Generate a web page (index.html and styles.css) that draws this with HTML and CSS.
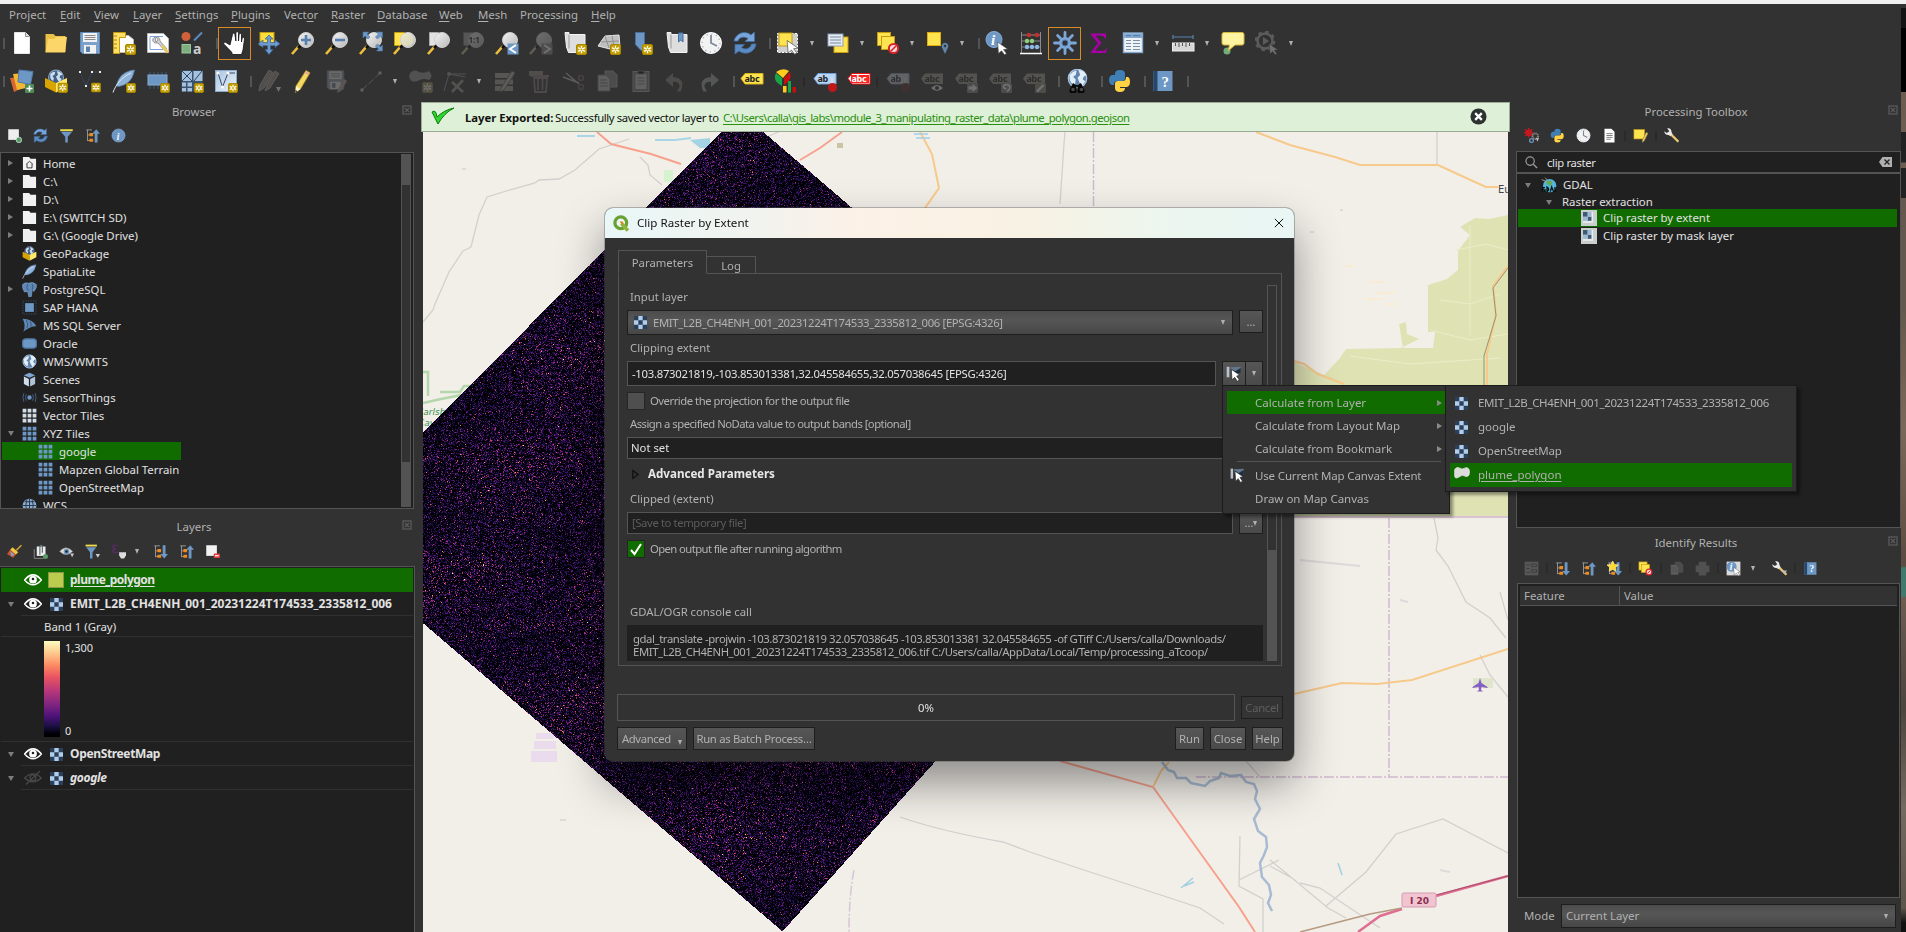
FILE: index.html
```html
<!DOCTYPE html>
<html lang="en">
<head>
<meta charset="utf-8">
<title>QGIS</title>
<link rel="stylesheet" href="styles.css">
</head>
<body>
<svg class="defs" width="0" height="0" aria-hidden="true">
<defs>
<linearGradient id="g-lens" x1="0" y1="0" x2="1" y2="1"><stop offset="0" stop-color="#f4f4f4"/><stop offset="1" stop-color="#b8b8b8"/></linearGradient>
<linearGradient id="g-sheet" x1="0" y1="0" x2="1" y2="1"><stop offset="0" stop-color="#a9c4e2"/><stop offset="1" stop-color="#eef3f8"/></linearGradient>
<symbol id="badge" viewBox="0 0 11 11"><rect x=".5" y=".5" width="10" height="10" rx="1.500" fill="#c4a000" stroke="#a88600"/><path d="M5.500 1.800v7.400M2 3.700l7 3.600M2 7.300l7-3.600" stroke="#fff" stroke-width="1.300"/><circle cx="5.500" cy="5.500" r="1" fill="#c4a000"/></symbol>
<symbol id="cursor" viewBox="0 0 12 14"><path d="M1 1l10 7-4 .6 3 4-2 1.200-3-4-3 2.700z" fill="#fff" stroke="#444" stroke-width=".6"/></symbol>
<symbol id="new" viewBox="0 0 24 24"><path d="M4.500 1.500h11l4 4v17h-15z" fill="#fff" stroke="#e6e6e6"/><path d="M15.500 1.500v4h4" fill="#ddd" stroke="#777" stroke-width=".8"/></symbol>
<symbol id="open" viewBox="0 0 24 24"><path d="M1.500 3h8l2 2h10v16h-20z" fill="#e9bf45"/><path d="M1.500 21.500L4 8h6l2-2h11l-2 15.500z" fill="#fcd668"/></symbol>
<symbol id="save" viewBox="0 0 24 24"><path d="M2.500 1.500h19v21h-17l-2-2z" fill="#7ba2cd" stroke="#6088b5"/><rect x="5" y="2" width="14" height="9" fill="#f2f2f2"/><path d="M6.500 4.500h11M6.500 6.500h11M6.500 8.500h11" stroke="#8a8a8a"/><rect x="6" y="14" width="12" height="8.500" fill="#f2f2f2"/><rect x="8" y="15.500" width="4" height="5.500" fill="#5d82ad"/></symbol>
<symbol id="newlayout" viewBox="0 0 24 24"><path d="M5.500 4.500h11l5 4v13h-16z" fill="#fff" stroke="#bbb"/><path d="M1.500 1.500h12v5h-6v16h-6z" fill="#ffdf67" stroke="#c59b11"/><path d="M2 5h3M2 9h3M2 13h3M2 17h3" stroke="#a88600"/><use href="#badge" x="13" y="13" width="11" height="11"/></symbol>
<symbol id="layoutmgr" viewBox="0 0 24 24"><path d="M1.500 2.500h16l5 5v14h-21z" fill="#fff" stroke="#bbb"/><path d="M4 5.500h13M4 5.500v13h13" stroke="#7aa0e0" fill="none"/><path d="M9 6c-3 1-3 5 0 6l3 0 7 8 2-2-7-8c0-3-2-5-4-4l2 3-2 2z" fill="#cfcfcf" stroke="#777" stroke-width=".7"/><path d="M16 15l6 6.500" stroke="#e8c860" stroke-width="3"/></symbol>
<symbol id="style" viewBox="0 0 24 24"><circle cx="6" cy="5.500" r="4.500" fill="#d2603a"/><path d="M14 9.500l8-8" stroke="#5d8ac0" stroke-width="2"/><rect x="2" y="13.500" width="8.500" height="8.500" fill="#7fae7f" stroke="#9cc79c"/><text x="13" y="22.500" class="ti a">a</text></symbol>
<symbol id="pan" viewBox="0 0 24 24"><path d="M7 14L3 11.500c-2-1-3 1-1.500 2.200L8.500 21l1 2.500h9L20 19l1.500-11c0-2-2-2-2.500 0l-.5 3V4c0-2-2.400-2-2.500 0l-.5 6V2.200c0-2-2.500-2-2.600 0V10l-1-6.500c-.3-2-2.700-1.500-2.500.3z" fill="#fff" stroke="#111" stroke-width=".8"/></symbol>
<symbol id="pansel" viewBox="0 0 24 24"><rect x="3" y="1.500" width="14" height="13" fill="#ffdf3c" stroke="#c59b11"/><path d="M12 4l4 4h-2.500v3.500H18V9l5 3.800-5 3.800V14.500h-4.500v4H16l-4 5-4-5h2.500v-4H6v2.100L1 12.800 6 9v2.500h4.500V8H8z" fill="#6d9bd1" stroke="#35618f" stroke-width=".7"/></symbol>
<symbol id="lens" viewBox="0 0 24 24"><path d="M1 23l7-8" stroke="#efc03d" stroke-width="2.600"/><path d="M7 17l3-3" stroke="#111" stroke-width="2.600"/><circle cx="15" cy="9" r="7.500" fill="url(#g-lens)" stroke="#d0d0d0"/></symbol>
<symbol id="zin" viewBox="0 0 24 24"><use href="#lens"/><path d="M15 4v10M10 9h10" stroke="#5680b3" stroke-width="2.600"/></symbol>
<symbol id="zout" viewBox="0 0 24 24"><use href="#lens"/><path d="M10 9h10" stroke="#5680b3" stroke-width="2.600"/></symbol>
<symbol id="zfull" viewBox="0 0 24 24"><use href="#lens"/><path d="M4 1h6L8 3l3 3-2 2-3-3-2 2zM23.500 1v6l-2-2-3 3-2-2 3-3-2-2zM23.500 20h-6l2-2-3-3 2-2 3 3 2-2z" fill="#6d97c4" stroke="#47709f" stroke-width=".6"/></symbol>
<symbol id="zsel" viewBox="0 0 24 24"><path d="M1.500 1.500h10v13h-10z" fill="#ffe34f" stroke="#c59b11"/><use href="#lens"/><circle cx="14.500" cy="9" r="6" fill="#e8e1b0" opacity=".6"/></symbol>
<symbol id="zlay" viewBox="0 0 24 24"><path d="M2.500 1.500h9v13h-9z" fill="#e2e2e2" stroke="#aaa"/><use href="#lens"/></symbol>
<symbol id="z11" viewBox="0 0 24 24"><path d="M2.500 1.500h9v13h-9z" fill="#aaa"/><use href="#lens"/><text x="7.500" y="12" class="ti one">1:1</text></symbol>
<symbol id="zlast" viewBox="0 0 24 24"><use href="#lens"/><rect x="12.500" y="12.500" width="11" height="11" fill="#6d97c4"/><path d="M21 14l-6 4 6 4" stroke="#fff" stroke-width="2" fill="none"/></symbol>
<symbol id="znext" viewBox="0 0 24 24"><use href="#lens"/><rect x="12.500" y="12.500" width="11" height="11" fill="#888"/><path d="M15 14l6 4-6 4" stroke="#fff" stroke-width="2" fill="none"/></symbol>
<symbol id="mapview" viewBox="0 0 24 24"><path d="M2 1.500h4v2h16v18H5.500L3.500 16z" fill="#dedede" stroke="#f4f4f4"/><path d="M6 3.500v14" stroke="#9a9a9a"/><use href="#badge" x="13" y="13" width="11" height="11"/></symbol>
<symbol id="map3d" viewBox="0 0 24 24"><path d="M1 15L8 5l14-1 1 12-10 2z" fill="#bfbfbf" stroke="#e6e6e6"/><path d="M4 11l18-1M8 5l4 12M15 4.500l2 12" stroke="#888" fill="none" stroke-width=".8"/><use href="#badge" x="13" y="13" width="11" height="11"/></symbol>
<symbol id="bm" viewBox="0 0 24 24"><path d="M4.500 1.500h9v20l-4.500-3-4.500-5z" fill="#6d97c4" stroke="#48709f"/><use href="#badge" x="11" y="13" width="11" height="11"/></symbol>
<symbol id="bms" viewBox="0 0 24 24"><path d="M2 1.500h4v2h16v18H5.500L3.500 16z" fill="#dedede" stroke="#f4f4f4"/><path d="M6 3.500v14" stroke="#9a9a9a"/><path d="M13.500 2h4.500v9l-2.200-2-2.300 2z" fill="#6d97c4" stroke="#48709f"/></symbol>
<symbol id="clock" viewBox="0 0 24 24"><circle cx="12" cy="12" r="10.500" fill="#f3f3f3" stroke="#fff"/><circle cx="12" cy="12" r="9" fill="none" stroke="#97a9bd" stroke-width="1.200" stroke-dasharray="1.200 3.500"/><path d="M12 4v8l6 3" fill="none" stroke="#7d8a98" stroke-width="1.800"/></symbol>
<symbol id="refresh" viewBox="0 0 24 24"><path d="M1 10C3 2 12-1 18 4l3.500-3v9.500H12l3-3C11 5 6 6 5 10z" fill="#79a6da" stroke="#3f6ea5" stroke-width=".8"/><path d="M23 13c-1 8-10 12-17 7l-4 3v-9.500h9.500l-3 3c4 3 9 1 10-3.500z" fill="#5c8bc2" stroke="#3f6ea5" stroke-width=".8"/></symbol>
<symbol id="sel" viewBox="0 0 24 24"><path d="M1.500 2.500h20v19h-20z" fill="#cfcfcf" stroke="#fff" stroke-dasharray="2 1.500"/><rect x="3" y="2" width="13" height="13" fill="#ffe34f" stroke="#c59b11"/><use href="#cursor" x="10" y="8" width="13" height="16"/></symbol>
<symbol id="selform" viewBox="0 0 24 24"><rect x="8" y="6" width="14" height="15.500" fill="#ffe34f" stroke="#c59b11"/><rect x="2" y="3" width="15" height="12" fill="#e6ecf2" stroke="#8da0b3"/><path d="M4 6h11M4 9h11M4 12h11" stroke="#728aa3"/></symbol>
<symbol id="desel" viewBox="0 0 24 24"><rect x="1.500" y="1.500" width="13" height="13" fill="#ffe34f" stroke="#c59b11"/><rect x="5.500" y="5.500" width="13" height="13" fill="#ffe34f" stroke="#c59b11"/><circle cx="17.500" cy="17.500" r="4.600" fill="#f6dada" stroke="#d8242b" stroke-width="2"/><path d="M15 20l5-5" stroke="#d8242b" stroke-width="1.600"/></symbol>
<symbol id="selloc" viewBox="0 0 24 24"><rect x="1.500" y="1.500" width="13" height="13" fill="#ffe34f" stroke="#e0ad0c"/><path d="M19 23l-3-6.500a3.300 3.300 0 1 1 6 0z" fill="#5f86a8"/><circle cx="19" cy="15" r="1.200" fill="#333"/></symbol>
<symbol id="ident" viewBox="0 0 24 24"><circle cx="9" cy="8.500" r="8" fill="#6d97c4" stroke="#87aed8"/><text x="6" y="14" class="ti ii">i</text><use href="#cursor" x="11" y="10" width="13" height="14"/></symbol>
<symbol id="abacus" viewBox="0 0 24 24"><path d="M2.500 1v21M21.500 1v21M2 4h20M2 10h20M2 16h20" stroke="#8a8a8a" fill="none"/><path d="M1 22.500h22" stroke="#fff" stroke-width="1.500"/><g><circle cx="10" cy="4" r="2.200" fill="#d02a2a"/><circle cx="18" cy="4" r="2.200" fill="#d02a2a"/><circle cx="8" cy="10" r="2.200" fill="#8fd07c"/><circle cx="13" cy="10" r="2.200" fill="#8fd07c"/><circle cx="8" cy="16" r="2.200" fill="#8db9e8"/><circle cx="13" cy="16" r="2.200" fill="#8db9e8"/><circle cx="18" cy="16" r="2.200" fill="#8db9e8"/></g></symbol>
<symbol id="gear" viewBox="0 0 24 24"><path d="M12 1.500v21M1.500 12h21M4.600 4.600l14.800 14.800M4.600 19.400L19.400 4.600" stroke="#7ca6d8" stroke-width="2.800" stroke-linecap="round"/><circle cx="12" cy="12" r="6" fill="#7ca6d8"/><circle cx="12" cy="12" r="3" fill="#323232" stroke="#4f7aac"/></symbol>
<symbol id="sigma" viewBox="0 0 24 24"><path d="M4 2.500h15v5h-1.200c-.5-2-1.300-2.800-3.500-2.800H8.500l6 7-6.500 8h7.500c2.500 0 3.500-1 4-3H20l-1 5.300H4v-1.200l7-8.500-7-8.200z" fill="#a800a8"/></symbol>
<symbol id="table" viewBox="0 0 24 24"><rect x="2.500" y="2" width="19" height="19.500" fill="#eef3f8" stroke="#84a9d1" stroke-width="1.400"/><rect x="3" y="2.500" width="18" height="4.500" fill="#84a9d1"/><path d="M5 4.700h5M12 4.700h7" stroke="#4c76a5"/><path d="M5 9.500h5M12 9.500h7M5 12.500h5M12 12.500h7M5 15.500h5M12 15.500h7M5 18.500h5M12 18.500h7" stroke="#7c8ea3" stroke-width="1.200"/></symbol>
<symbol id="measure" viewBox="0 0 24 24"><path d="M2 6h20M2 4v4M22 4v4" stroke="#5781ad" stroke-width="1.200"/><rect x="1.500" y="12" width="21.500" height="8" fill="#d6d6d6" stroke="#efefef"/><path d="M4.500 12v3M8 12v4M11.500 12v3M15 12v4M18.500 12v3" stroke="#555"/></symbol>
<symbol id="tip" viewBox="0 0 24 24"><circle cx="6" cy="20" r="3.500" fill="#6fae78"/><path d="M3 1.500h18q2 0 2 2v8.500q0 2-2 2h-7l-7 6 1.500-6H3q-2 0-2-2V3.500q0-2 2-2z" fill="#fdf3a0" stroke="#d8b63a"/></symbol>
<symbol id="action" viewBox="0 0 24 24"><circle cx="10" cy="10" r="7.500" fill="none" stroke="#bbb" stroke-width="2.500"/><circle cx="10" cy="10" r="9.300" fill="none" stroke="#bbb" stroke-width="2" stroke-dasharray="3.500 3.800"/><path d="M8 6l6 4-6 4z" fill="#bbb"/><use href="#cursor" x="13" y="12" width="11" height="12"/></symbol>
<symbol id="dsm" viewBox="0 0 24 24"><path d="M0 9l10-1 2 11-8 4z" fill="#d8682e"/><path d="M3 5l12-1 1 15-9 2z" fill="#f2b833"/><path d="M9 1l14 1.500-2.500 13L8 13z" fill="#6d97c4" stroke="#507cab"/><rect x="15" y="15" width="9" height="9" rx="1" fill="#4f8a57"/><path d="M19.500 16.500v6M16.500 19.500h6" stroke="#fff" stroke-width="1.600"/></symbol>
<symbol id="globe" viewBox="0 0 24 24"><circle cx="12" cy="12" r="10.500" fill="#3e5f86" stroke="#8eabc9" stroke-width="1.500"/><path d="M4 7q4-4 7-3l-1 4-3 2 2 3-1 4q-5-2-4-10zM13 3q6 0 8 5l-3 1-1 3 3 2-3 5-3-4-2-4 3-3z" fill="#cfdcea"/></symbol>
<symbol id="wglobe" viewBox="0 0 24 24"><circle cx="12" cy="12" r="10.500" fill="#5f83ad" stroke="#a9c4e2" stroke-width="1.500"/><path d="M3 8q4-5 8-5l-1 5-3 2 3 3-1 7q-7-3-6-12zM13 2q7 1 9 6l-3 2-1 3 3 2-4 6-3-5-2-5 3-3z" fill="#e3edf7"/></symbol>
<symbol id="gpkg" viewBox="0 0 24 24"><use href="#globe" x="3.500" y="0" width="17" height="17"/><path d="M1 9l11 5v9.500L1 18z" fill="#d9a400"/><path d="M23 9l-11 5v9.500L23 18z" fill="#ffe96b"/></symbol>
<symbol id="gpkgn" viewBox="0 0 24 24"><use href="#gpkg"/><use href="#badge" x="13.500" y="13.500" width="10.500" height="10.500"/></symbol>
<symbol id="shp" viewBox="0 0 24 24"><path d="M2 3l6 14 6-14h8" fill="none" stroke="#34506e" stroke-dasharray="2 1"/><path d="M1 2h2v2H1zM7 16h2v2H7zM13 2h2v2h-2zM21 2h2v2h-2z" fill="#e6eef6"/><use href="#badge" x="13" y="13.500" width="10" height="10"/></symbol>
<symbol id="feather" viewBox="0 0 24 24"><path d="M22.500 1C12 2 6 8 4.500 17l2 .5C14 16 20 13 22.500 1z" fill="#8fb3d9" stroke="#5580ae" stroke-width=".7"/><path d="M1 23.500C4 15 10 8 19 4" fill="none" stroke="#e1ebf5"/></symbol>
<symbol id="feathn" viewBox="0 0 24 24"><use href="#feather"/><use href="#badge" x="14" y="14" width="10" height="10"/></symbol>
<symbol id="memn" viewBox="0 0 24 24"><path d="M4 3v4M8 3v4M12 3v4M16 3v4M20 3v4M4 16v4M8 16v4M12 16v4" stroke="#3c5a7b"/><rect x="2" y="6" width="19" height="10" fill="#6d97c4" stroke="#89acd2"/><use href="#badge" x="14" y="14" width="10" height="10"/></symbol>
<symbol id="meshn" viewBox="0 0 24 24"><rect x="1.500" y="1.500" width="21" height="21" fill="#3a5470"/><path d="M2 2h10v10H2zM13.500 2h9v10h-9zM2 13.500h4v4H2zM7.500 13.500h4.500v4H7.500zM2 19h4v3.500H2zM7.500 19h4.500v3.500H7.500z" fill="#a5c1de"/><path d="M2 2l10 10M12 2L2 12M14 12l8-10" stroke="#2c4562"/><use href="#badge" x="14" y="14" width="10" height="10"/></symbol>
<symbol id="virt" viewBox="0 0 24 24"><rect x="1.500" y="1.500" width="21" height="21" fill="url(#g-sheet)" stroke="#8ba9c8"/><path d="M4 4l4.500 14L14 4h7" fill="none" stroke="#334b66"/><circle cx="4" cy="4" r="1.500" fill="#fff"/><circle cx="8.500" cy="18" r="1.500" fill="#fff"/><circle cx="14" cy="4" r="1.500" fill="#fff"/><use href="#badge" x="14" y="14" width="10" height="10"/></symbol>
<symbol id="pencil" viewBox="0 0 24 24"><path d="M5 17L15 1.500l4 2.300L9.500 20l-5 3.500z" fill="#f3d863" stroke="#b8971c" stroke-width=".8"/><path d="M5 17l-.5 6.500 5-3.500z" fill="#fff2d6"/><path d="M4.500 21v2.500l2-1.300z" fill="#222"/><path d="M14 3l4 2.400" stroke="#e8a6a0" stroke-width="2"/></symbol>
<symbol id="pencils" viewBox="0 0 24 24"><path d="M3 16L12 1l4 2.500L7 19l-5 3zM10 16l8-14 4 2.500L13 19l-5 3z" fill="#b58a6a" stroke="#ccc" stroke-width=".8"/><path d="M19 18h5l-2.500 5z" fill="#fff"/></symbol>
<symbol id="savee" viewBox="0 0 24 24"><use href="#save" x="0" y="0" width="21" height="22"/><path d="M13 20l6-10 3 2-6 10-4 2z" fill="#d8a080"/></symbol>
<symbol id="line" viewBox="0 0 24 24"><path d="M3 21L21 4" stroke="#aaa" stroke-dasharray="7 2"/><path d="M1.500 19.500h3v3h-3zM19.500 2.500h3v3h-3z" fill="#ccc"/></symbol>
<symbol id="addf" viewBox="0 0 24 24"><path d="M2 3q4-3 8 0 5 2 10-1 5 6 0 9-6-2-9 0-8 4-10-1-2-4 1-7z" fill="#999"/><use href="#badge" x="13" y="13" width="11" height="11"/></symbol>
<symbol id="vertex" viewBox="0 0 24 24"><path d="M1 22L6 5l16 3M6 5h17" stroke="#999" fill="none"/><circle cx="6" cy="5" r="2" fill="#999"/><path d="M9 13l11 10M20 11L9 23" stroke="#aa9d80" stroke-width="2.600"/></symbol>
<symbol id="rows" viewBox="0 0 24 24"><path d="M2 4h18v5H2zM2 10.500h18v5H2zM2 17h18v5H2z" fill="#b5a578"/><path d="M8 19L19 2l3 2-11 17-4 2z" fill="#bbb" stroke="#666"/></symbol>
<symbol id="del" viewBox="0 0 24 24"><path d="M2 2h14v5H2z" fill="#a78c62"/><path d="M4 7h18M7 9h13l-1 14H8zM11 9v12M15.500 9v12" stroke="#b37474" stroke-width="1.800" fill="none"/></symbol>
<symbol id="cut" viewBox="0 0 24 24"><path d="M2 8l16 6M5 4l13 11" stroke="#bbb" stroke-width="1.500"/><circle cx="20" cy="9" r="2.500" fill="none" stroke="#a55" stroke-width="1.500"/><circle cx="20" cy="18" r="2.500" fill="none" stroke="#a55" stroke-width="1.500"/></symbol>
<symbol id="copy" viewBox="0 0 24 24"><path d="M10 2h8l4 4v12H10z" fill="#888" stroke="#aaa"/><path d="M3 6h8l4 4v12H3z" fill="#c4c4c4" stroke="#777"/><path d="M5 11h7M5 14h8M5 17h8" stroke="#777"/></symbol>
<symbol id="paste" viewBox="0 0 24 24"><rect x="4" y="2.500" width="16" height="20" fill="#777" stroke="#aaa"/><path d="M6.500 5h11v15h-11z" fill="#ccc"/><path d="M9 2h6v3H9zM8.500 9h7M8.500 12h7M8.500 15h7" stroke="#777"/></symbol>
<symbol id="undo" viewBox="0 0 24 24"><path d="M2 11l8-7v4q13 1 8 14-2 1-4 0 4-4 2-7-2-3-6-2v5z" fill="#a37f70"/></symbol>
<symbol id="redo" viewBox="0 0 24 24"><path d="M22 11l-8-7v4Q1 9 6 22q2 1 4 0-4-4-2-7 2-3 6-2v5z" fill="#9fb0a6"/></symbol>
<symbol id="lab" viewBox="0 0 24 24"><path d="M1 9.500l4-5h18v10.500H5z" fill="#ffe34f" stroke="#d6b21e"/><text x="4.500" y="12.500" class="ti abc">abc</text></symbol>
<symbol id="labr" viewBox="0 0 24 24"><path d="M1 9.500l4-5h18v10.500H5z" fill="#fff" stroke="#e11"/><path d="M4 6h18v8H4z" fill="#f22"/><text x="4.500" y="12.500" class="ti abc w">abc</text></symbol>
<symbol id="labpin" viewBox="0 0 24 24"><path d="M1 9.500l4-5h18v10.500H5z" fill="#b9d6f5" stroke="#6fa2dc"/><text x="4.500" y="12.500" class="ti abc">ab</text><path d="M19 9v8" stroke="#ddd" stroke-width="2"/><circle cx="19.500" cy="18.500" r="4.500" fill="#c01818"/></symbol>
<symbol id="labg" viewBox="0 0 24 24"><path d="M1 9.500l4-5h18v10.500H5z" fill="#a79d70"/><text x="4.500" y="12.500" class="ti abc">abc</text></symbol>
<symbol id="labeye" viewBox="0 0 24 24"><use href="#labg"/><path d="M11 19q6-6 12 0-6 6-12 0z" fill="#eee"/><circle cx="17" cy="19" r="2" fill="#333"/></symbol>
<symbol id="labmove" viewBox="0 0 24 24"><use href="#labg"/><rect x="13" y="14" width="11" height="10" rx="1.500" fill="#888"/><path d="M14.500 17.500h4V15l5 4-5 4v-2.500h-4z" fill="#fff"/></symbol>
<symbol id="labrot" viewBox="0 0 24 24"><use href="#labg"/><rect x="13" y="14" width="11" height="10" rx="1.500" fill="#888"/><path d="M19 22.500q3-2 3-4.500-.5-2.500-3.500-2.500T15.500 18q.5 2 3 1.500" stroke="#fff" fill="none" stroke-width="1.600"/></symbol>
<symbol id="labedit" viewBox="0 0 24 24"><use href="#labg"/><rect x="13" y="14" width="11" height="10" rx="1.500" fill="#998a55"/><path d="M15 22.500l6.500-6.500" stroke="#fff" stroke-width="2.400"/></symbol>
<symbol id="diag" viewBox="0 0 24 24"><path d="M9 9L2 3q7-5 13-1z" fill="#ffcc1c"/><path d="M8 9v8Q-2 12 2 4z" fill="#18a54a"/><path d="M10 9l6-6q3 8-6 13z" fill="#c60f0f"/><path d="M9 17h3.500v6.500H9z" fill="#ffcc1c"/><path d="M14 12h3v11.500h-3z" fill="#18a54a"/><path d="M18.500 18h3.500v5.500h-3.500z" fill="#c60f0f"/></symbol>
<symbol id="meta" viewBox="0 0 24 24"><use href="#wglobe" x="1" y="-1" width="23" height="21"/><path d="M5 20a3.500 3.500 0 1 0 6 0l1-3 1 3a3.500 3.500 0 1 0 6 0l-3-6-3 2h-2l-3-2z" fill="#080808"/><circle cx="8" cy="20.500" r="1.800" fill="#4a4a4a"/><circle cx="16.500" cy="20.500" r="1.800" fill="#4a4a4a"/></symbol>
<symbol id="py" viewBox="0 0 24 24"><path d="M7 5q0-4 5-4t5 4v4q0 3-3 3H9q-3 0-3 4H4q-3-1-3-5t3-5h8V6H7z" fill="#3f7fb6"/><path d="M17 19q0 4-5 4t-5-4v-4q0-3 3-3h5q3 0 3-4h2q2 1 2 5t-3 5h-7v1h5z" fill="#ffd343"/></symbol>
<symbol id="help" viewBox="0 0 24 24"><path d="M2.500 2h19v20h-19z" fill="#6d97c4"/><path d="M2.500 2h4v20h-4z" fill="#26466b"/><text x="10.500" y="17.500" class="ti q">?</text></symbol>
<symbol id="layadd" viewBox="0 0 24 24"><rect x="2" y="2" width="17" height="17" fill="#eee"/><circle cx="19" cy="19" r="4.500" fill="#5b9a68" stroke="#dfe"/></symbol>
<symbol id="layrem" viewBox="0 0 24 24"><rect x="2" y="2" width="17" height="17" fill="#f2f2f2"/><rect x="14" y="15" width="10" height="7.500" rx="1" fill="#e33b3b"/><path d="M16 18.700h6" stroke="#fff" stroke-width="2"/></symbol>
<symbol id="filter" viewBox="0 0 24 24"><path d="M2 2h20v3H2z" fill="#f3dc4a"/><path d="M3 6h18l-7 8v9h-4v-9z" fill="#6d97c4"/></symbol>
<symbol id="filterv" viewBox="0 0 24 24"><path d="M1 1h18v3H1z" fill="#f3dc4a"/><path d="M2 5h16l-6 8v10H8V13z" fill="#6d97c4"/><path d="M17 16h7l-3.500 6z" fill="#ccc"/></symbol>
<symbol id="coll" viewBox="0 0 24 24"><path d="M2 3h9M4 3v18M4 11h5M4 20h5" stroke="#999" fill="none" stroke-width="1.500"/><path d="M7 8h6v5H7zM7 17h6v5H7z" fill="#f08a1c"/><path d="M15.500 23V9H11.500L18 2l6 7h-4v14z" fill="#6d97c4"/></symbol>
<symbol id="expa" viewBox="0 0 24 24"><path d="M2 3h9M4 3v18M4 11h5M4 20h5" stroke="#999" fill="none" stroke-width="1.500"/><path d="M7 8h6v5H7zM7 17h6v5H7z" fill="#f08a1c"/><path d="M15.500 2v14H11.500L18 23l6-7h-4V2z" fill="#6d97c4"/></symbol>
<symbol id="expn" viewBox="0 0 24 24"><use href="#expa"/><path d="M9 0l3 5.500 6 .8-4.500 4 1 6L9 13.500l-5.500 2.800 1-6L0 6.300l6-.8z" fill="#ffd92e" stroke="#fff2b0"/></symbol>
<symbol id="info" viewBox="0 0 24 24"><circle cx="12" cy="12" r="10.500" fill="#6d97c4" stroke="#84a9d1"/><text x="9" y="18.500" class="ti ii">i</text></symbol>
<symbol id="brush" viewBox="0 0 24 24"><path d="M23 2l-8 8" stroke="#d8a13a" stroke-width="2.500"/><path d="M9 5l9 8-4 4-9-8z" fill="#f2c33c"/><path d="M5 9l9 8-4 5-10-6z" fill="#d2502e"/><path d="M5 11l7 6-5 3z" fill="#7fa6d2"/></symbol>
<symbol id="grp" viewBox="0 0 24 24"><path d="M2 8v15h15" fill="none" stroke="#888" stroke-width="1.500"/><rect x="6" y="4" width="14" height="15" fill="#eee"/><path d="M11 17V5q2-6 4 0v9" stroke="#677" stroke-width="2" fill="none"/><circle cx="20" cy="20" r="4" fill="#5b9a68"/></symbol>
<symbol id="eye" viewBox="0 0 28 20"><path d="M1 10Q14-6 27 10 14 25 1 10z" fill="none" stroke="#fff" stroke-width="2.400"/><circle cx="14" cy="9.500" r="6" fill="#fff"/><circle cx="14" cy="8.500" r="2" fill="#222"/></symbol>
<symbol id="eyeoff" viewBox="0 0 28 20"><path d="M1 10Q14-3 27 10 14 22 1 10zM3 20L25-1" fill="none" stroke="#484848" stroke-width="2"/><circle cx="14" cy="9.500" r="4.500" fill="none" stroke="#484848" stroke-width="2"/></symbol>
<symbol id="eyef" viewBox="0 0 24 24"><path d="M1 12Q11 0 22 12 11 22 1 12z" fill="#ddd" stroke="#777"/><circle cx="12" cy="12" r="4.500" fill="#6d97c4"/><circle cx="12" cy="12" r="2" fill="#222"/><path d="M18 15h6l-3 6z" fill="#ccc"/></symbol>
<symbol id="eps" viewBox="0 0 24 24"><path d="M11 3Q2 0 3 5q1 3 5 3-5 0-5 3 0 4 9 2" stroke="#5d2a66" stroke-width="2.200" fill="none"/><path d="M13 13h11v5l-3 5h-5l-3-5z" fill="#ddd"/></symbol>
<symbol id="ras" viewBox="0 0 24 24"><rect width="24" height="24" fill="#2b4058"/><path d="M8 0h8v8H8zM0 8h8v8H0zM16 8h8v8h-8zM8 16h8v8H8z" fill="#b0cdec"/></symbol>
<symbol id="clipr" viewBox="0 0 24 24"><rect width="24" height="24" fill="#c9cfce"/><path d="M3 3h7v7H3zM10 10h6v6h-6z" fill="#3d5a76"/><path d="M10 3h6v7h-6zM3 10h7v6H3z" fill="#9db9d4"/><path d="M17 3v15H3" stroke="#eee" fill="none" stroke-width="2"/></symbol>
<symbol id="folder" viewBox="0 0 24 24"><path d="M1.500 1.500h10l2 3h9v18h-21z" fill="#f1f1f1"/></symbol>
<symbol id="home" viewBox="0 0 24 24"><use href="#folder"/><path d="M6.500 13.500L12 8.500l5.500 5M8 13v6h8v-6" fill="none" stroke="#333" stroke-width="1.500"/></symbol>
<symbol id="pg" viewBox="0 0 24 24"><path d="M1 4q4-4 9-2 8-3 13 2 1 5-3 10l-2 1v-3l-2 2-1 9-4 1-2-9-5 1Q0 10 1 4z" fill="#6088b5" stroke="#7fa6d2"/><path d="M9 3q-3 6 1 11M16 3q3 5 0 10" stroke="#27415f" fill="none"/></symbol>
<symbol id="hana" viewBox="0 0 24 24"><rect x="5" y="5" width="14" height="14" fill="#6d97c4"/><rect x="1.500" y="1.500" width="21" height="21" fill="none" stroke="#38536f" stroke-width="1.500" stroke-dasharray="2 2"/></symbol>
<symbol id="mssql" viewBox="0 0 24 24"><path d="M1 1q16 0 22 12-11 0-21 9 5-10-1-21z" fill="#6088b5"/><path d="M7 3q4 7 1 13M13 5q3 5 1 9" stroke="#24384f" fill="none"/></symbol>
<symbol id="orcl" viewBox="0 0 24 24"><rect x="1" y="4.500" width="22" height="15" rx="5" fill="#6d97c4" stroke="#4e759f" stroke-width="2"/></symbol>
<symbol id="cube" viewBox="0 0 24 24"><path d="M12 1l9 4-9 4-9-4z" fill="#7fa6d2"/><path d="M3 7l8 4v12l-8-4z" fill="#cfdcea"/><path d="M21 7l-8 4v12l8-4z" fill="#afc4da"/></symbol>
<symbol id="sensor" viewBox="0 0 24 24"><circle cx="12" cy="12" r="3.500" fill="#6d97c4"/><path d="M7 7q-3 5 0 10M17 7q3 5 0 10M3 5q-3 7 0 14M21 5q3 7 0 14" stroke="#45658a" fill="none" stroke-width="1.500"/></symbol>
<symbol id="grid" viewBox="0 0 24 24"><path d="M1 1h6v6H1zM9 1h6v6H9zM17 1h6v6h-6zM1 9h6v6H1zM9 9h6v6H9zM17 9h6v6h-6zM1 17h6v6H1zM9 17h6v6H9zM17 17h6v6h-6z" fill="currentColor"/></symbol>
<symbol id="wcs" viewBox="0 0 24 24"><circle cx="12" cy="12" r="11" fill="#8eaccd"/><path d="M12 1v22M1 12h22M4 6h16M4 18h16M8 2q-4 10 0 20M16 2q4 10 0 20" stroke="#24384f" fill="none" stroke-width="1.500"/></symbol>
<symbol id="ptool" viewBox="0 0 24 24"><path d="M7.500 0v15M0 7.500h15M2 2l11 11M2 13L13 2" stroke="#c9171f" stroke-width="2"/><circle cx="7.500" cy="7.500" r="4" fill="none" stroke="#c9171f" stroke-width="2.500"/><circle cx="18" cy="13" r="4.500" fill="none" stroke="#8c8c8c" stroke-width="3" stroke-dasharray="2 1"/><circle cx="12" cy="20" r="3" fill="none" stroke="#6d97c4" stroke-width="2"/><path d="M19 16h5l-2.500 6z" fill="#bbb"/></symbol>
<symbol id="doc" viewBox="0 0 24 24"><path d="M4 1h11l5 5v17H4z" fill="#fff"/><path d="M7 9h10M7 12h10M7 15h10M7 18h7" stroke="#555" stroke-width="1.200"/></symbol>
<symbol id="edity" viewBox="0 0 24 24"><rect x="1.500" y="2.500" width="17" height="15" fill="#ffe34f" stroke="#c59b11"/><path d="M15 19l6-12 3 1.500-6 12-3 2.500z" fill="#f5d14c" stroke="#876"/></symbol>
<symbol id="wrench" viewBox="0 0 24 24"><path d="M5 .5q7-1 7 6l2 4-3 2.500-4-2Q1 11 .5 5l4 3 4-3z" fill="#eaeaea"/><path d="M12 11l11 11" stroke="#e9cb74" stroke-width="3.500"/></symbol>
<symbol id="wrenchv" viewBox="0 0 24 24"><use href="#wrench"/><path d="M16 15h8l-4 6z" fill="#bbb"/></symbol>
<symbol id="form" viewBox="0 0 24 24"><rect x="1" y="1" width="22" height="22" fill="#aaa"/><path d="M4 6h5M4 12h5M4 18h5M12 5h8v4h-8zM12 14h8v4h-8z" stroke="#555" fill="none" stroke-width="1.500"/></symbol>
<symbol id="print" viewBox="0 0 24 24"><path d="M6 1h12v6h5v11h-5v5H6v-5H1V7h5z" fill="#999"/></symbol>
<symbol id="identm" viewBox="0 0 24 24"><rect x="1" y="1" width="22" height="22" fill="#dcdcdc"/><circle cx="9" cy="9" r="8" fill="#6d97c4"/><text x="6" y="15" class="ti ii">i</text><use href="#cursor" x="11" y="9" width="13" height="15"/></symbol>
<symbol id="extent" viewBox="0 0 24 24"><path d="M1 1h4v16H1z" fill="#b9c2ca"/><path d="M6 2l16-1v10H8z" fill="#62778b"/><path d="M7 4l7 4 8-5v8H9z" fill="#1d2e40"/><path d="M8 5l13 9-5 1 4 6-3 2-4-6-4 4z" fill="#fff" stroke="#222"/></symbol>
<symbol id="poly" viewBox="0 0 24 18"><path d="M1 4q2-4 6-3 5 4 11 0 6 0 5 8 0 6-6 5-4-3-8 0-7 5-8 0z" fill="#dcdcdc" stroke="#f3f3f3"/></symbol>
<symbol id="dock" viewBox="0 0 10 10"><rect x="1" y="1" width="8" height="8" fill="none" stroke="#5a5a5a" stroke-width="1.300"/><path d="M3 3l4 4M7 3L3 7" stroke="#5a5a5a" stroke-width="1.300"/></symbol>
<symbol id="gdal" viewBox="0 0 24 24"><circle cx="13" cy="13" r="10" fill="#54b5d9"/><path d="M9 6q6-2 8 2l-2 5-4-1-3-3z" fill="#6a5"/><path d="M1 4l8 3M6 1l4 4" stroke="#999" stroke-width="1.500"/><path d="M2 22v-6h4M6 22v-4M9 22v-7q5 3 0 7M14 22l2-7 3 7M21 15v7h2" stroke="#061010" stroke-width="2" fill="none"/></symbol>
<symbol id="qgis" viewBox="0 0 24 24"><circle cx="11" cy="11" r="8.300" fill="none" stroke="#69a132" stroke-width="4.600"/><path d="M12 12l9 10" stroke="#8fb63a" stroke-width="5"/><path d="M9 9h5v5z" fill="#ee7913"/></symbol>
</defs>
</svg>

<div class="app">
<div class="topstrip"></div>
<nav class="menubar"><span>Pro<u>j</u>ect</span><span><u>E</u>dit</span><span><u>V</u>iew</span><span><u>L</u>ayer</span><span><u>S</u>ettings</span><span><u>P</u>lugins</span><span>Vect<u>o</u>r</span><span><u>R</u>aster</span><span><u>D</u>atabase</span><span><u>W</u>eb</span><span><u>M</u>esh</span><span>Pro<u>c</u>essing</span><span><u>H</u>elp</span></nav>
<div class="toolbar">
<i class="h first"></i>
<b><svg><use href="#new"/></svg></b><b><svg><use href="#open"/></svg></b><b><svg><use href="#save"/></svg></b><b><svg><use href="#newlayout"/></svg></b><b><svg><use href="#layoutmgr"/></svg></b><b><svg><use href="#style"/></svg></b>
<i class="h"></i>
<b class="on"><svg><use href="#pan"/></svg></b><b><svg><use href="#pansel"/></svg></b><b><svg><use href="#zin"/></svg></b><b><svg><use href="#zout"/></svg></b><b><svg><use href="#zfull"/></svg></b><b><svg><use href="#zsel"/></svg></b><b><svg><use href="#zlay"/></svg></b><b class="dim"><svg><use href="#z11"/></svg></b><b><svg><use href="#zlast"/></svg></b><b class="dim"><svg><use href="#znext"/></svg></b><b><svg><use href="#mapview"/></svg></b><b><svg><use href="#map3d"/></svg></b><b><svg><use href="#bm"/></svg></b><b><svg><use href="#bms"/></svg></b><b><svg><use href="#clock"/></svg></b><b><svg><use href="#refresh"/></svg></b>
<i class="h"></i>
<b><svg><use href="#sel"/></svg></b><em></em><b><svg><use href="#selform"/></svg></b><em></em><b><svg><use href="#desel"/></svg></b><em></em><b><svg><use href="#selloc"/></svg></b><em></em>
<i class="h"></i>
<b><svg><use href="#ident"/></svg></b><b><svg><use href="#abacus"/></svg></b><b class="on"><svg><use href="#gear"/></svg></b><b><svg><use href="#sigma"/></svg></b><b><svg><use href="#table"/></svg></b><em></em><b><svg><use href="#measure"/></svg></b><em></em><b><svg><use href="#tip"/></svg></b><b class="dim"><svg><use href="#action"/></svg></b><em></em>
</div>
<div class="toolbar second">
<i class="h first"></i>
<b><svg><use href="#dsm"/></svg></b><b><svg><use href="#gpkgn"/></svg></b><b><svg><use href="#shp"/></svg></b><b><svg><use href="#feathn"/></svg></b><b><svg><use href="#memn"/></svg></b><b><svg><use href="#meshn"/></svg></b><b><svg><use href="#virt"/></svg></b>
<i class="h"></i>
<b class="dim"><svg><use href="#pencils"/></svg></b><b><svg><use href="#pencil"/></svg></b><b class="dim"><svg><use href="#savee"/></svg></b><b class="dim"><svg><use href="#line"/></svg></b><em></em><b class="dim"><svg><use href="#addf"/></svg></b><b class="dim"><svg><use href="#vertex"/></svg></b><em></em><b class="dim"><svg><use href="#rows"/></svg></b><b class="dim"><svg><use href="#del"/></svg></b><b class="dim"><svg><use href="#cut"/></svg></b><b class="dim"><svg><use href="#copy"/></svg></b><b class="dim"><svg><use href="#paste"/></svg></b><b class="dim"><svg><use href="#undo"/></svg></b><b class="dim"><svg><use href="#redo"/></svg></b>
<i class="h"></i>
<b><svg><use href="#lab"/></svg></b><b><svg><use href="#diag"/></svg></b><i class="s"></i><b><svg><use href="#labpin"/></svg></b><b><svg><use href="#labr"/></svg></b><i class="s"></i><b class="dim"><svg><use href="#labpin"/></svg></b><b class="dim"><svg><use href="#labeye"/></svg></b><b class="dim"><svg><use href="#labmove"/></svg></b><b class="dim"><svg><use href="#labrot"/></svg></b><b class="dim"><svg><use href="#labedit"/></svg></b>
<i class="h"></i><b><svg><use href="#meta"/></svg></b><i class="h"></i><b><svg><use href="#py"/></svg></b><i class="h"></i><b><svg><use href="#help"/></svg></b><i class="h"></i>
</div>

<div class="main">
<aside class="left">
<div class="ptitle">Browser<svg class="dock"><use href="#dock"/></svg></div>
<div class="ptools"><b><svg><use href="#layadd"/></svg></b><b><svg><use href="#refresh"/></svg></b><b><svg><use href="#filter"/></svg></b><b><svg><use href="#coll"/></svg></b><b><svg><use href="#info"/></svg></b></div>
<div class="browser">
<ul class="tree">
<li><i class="r"></i><svg><use href="#home"/></svg>Home</li>
<li><i class="r"></i><svg><use href="#folder"/></svg>C:\</li>
<li><i class="r"></i><svg><use href="#folder"/></svg>D:\</li>
<li><i class="r"></i><svg><use href="#folder"/></svg>E:\ (SWITCH SD)</li>
<li><i class="r"></i><svg><use href="#folder"/></svg>G:\ (Google Drive)</li>
<li><i></i><svg><use href="#gpkg"/></svg>GeoPackage</li>
<li><i></i><svg><use href="#feather"/></svg>SpatiaLite</li>
<li><i class="r"></i><svg><use href="#pg"/></svg>PostgreSQL</li>
<li><i></i><svg><use href="#hana"/></svg>SAP HANA</li>
<li><i></i><svg><use href="#mssql"/></svg>MS SQL Server</li>
<li><i></i><svg><use href="#orcl"/></svg>Oracle</li>
<li><i></i><svg><use href="#wglobe"/></svg>WMS/WMTS</li>
<li><i></i><svg><use href="#cube"/></svg>Scenes</li>
<li><i></i><svg><use href="#sensor"/></svg>SensorThings</li>
<li><i></i><svg class="lt"><use href="#grid"/></svg>Vector Tiles</li>
<li><i class="d"></i><svg><use href="#grid"/></svg>XYZ Tiles</li>
<li class="sub sel"><svg><use href="#grid"/></svg>google</li>
<li class="sub"><svg><use href="#grid"/></svg>Mapzen Global Terrain</li>
<li class="sub"><svg><use href="#grid"/></svg>OpenStreetMap</li>
<li><i></i><svg><use href="#wcs"/></svg>WCS</li>
</ul>
<div class="vscroll"><div></div></div>
</div>
<div class="ptitle lay">Layers<svg class="dock"><use href="#dock"/></svg></div>
<div class="ptools lt2"><b><svg><use href="#brush"/></svg></b><b><svg><use href="#grp"/></svg></b><b><svg><use href="#eyef"/></svg></b><b><svg><use href="#filterv"/></svg></b><b><svg><use href="#eps"/></svg></b><em></em><b><svg><use href="#expa"/></svg></b><b><svg><use href="#coll"/></svg></b><b><svg><use href="#layrem"/></svg></b></div>
<div class="layers">
<div class="lrow sel"><i></i><svg class="eye"><use href="#eye"/></svg><span class="swatch"></span><span class="nm"><u class="full">plume_polygon</u></span></div>
<div class="lrow"><i class="d"></i><svg class="eye"><use href="#eye"/></svg><svg class="ras"><use href="#ras"/></svg><span class="nm wide">EMIT_L2B_CH4ENH_001_20231224T174533_2335812_006</span></div>
<div class="band">Band 1 (Gray)</div>
<div class="ramp"><div class="grad"></div><div class="lims"><span>1,300</span><span>0</span></div></div>
<div class="lrow"><i class="d"></i><svg class="eye"><use href="#eye"/></svg><svg class="ras"><use href="#ras"/></svg><span class="nm">OpenStreetMap</span></div>
<div class="lrow"><i class="d"></i><svg class="eye"><use href="#eyeoff"/></svg><svg class="ras"><use href="#ras"/></svg><span class="nm it">google</span></div>
</div>
</aside>

<section class="canvas">
<svg class="map" viewBox="423 102 1085 830" width="1085" height="830">
<rect x="423" y="102" width="1085" height="830" fill="#f2efe9"/>
<path d="M1508 215L1489 219 1475 218 1460 227 1470 235 1458 251V270L1447 279 1428 285V332H1435L1433 348H1403L1399 324 1406 322 1407 334 1419 339 1401 348 1346 349 1340 358 1324 375 1294 362V517H1508z" fill="#dfe3b4"/>
<path d="M1456 250l30-6 22 6M1440 300l30 4 30-10M1430 330l40 10 38-6M1350 356l60 8 90-6M1470 225v110" fill="none" stroke="#ebedc6"/>
<path d="M1294 517h214" stroke="#d9c3d3" stroke-width="2"/>
<g fill="none" stroke="#cfb8cf" stroke-width="1.500" stroke-dasharray="10 2 2 2"><path d="M1093.500 132v80M1389 518v259M1196 777h312"/></g><path d="M854 870q-5 25-5 62" fill="none" stroke="#d6c5d6" stroke-width="1.500" stroke-dasharray="10 2 2 2"/>
<g fill="none" stroke="#d2d0ce" stroke-width="1.300">
<path d="M423 322l10-12 2-6 14-32 14-21 8-4 8-32 8-18 26-8 22-6 4-3 20-1 16-9 24-21 30-10"/>
<path d="M640 157l8 8 2 10 12 10M760 140l50-22M1065 132l-1 12-4 60M1437 132v32M1434 518l4 20 -2 12 12 16 18 36 24 16 16 20M1500 592l8 28M1260 777l-14-16M1240 836l-1 50 24 13 0 33M1239 880l40-20M1270 860l22 18 36 30 18 10M1292 878l-22-12M1300 883l20 5 60 40M1480 655l10 20 18 22"/>
<path d="M900 817q40 14 103 25l27 10 60 20 80 26 30 10 24 16M1326 906l40-34 30-38 47-15 65 34"/>
</g>
<path d="M1230 530l40 30M1300 560l60 6M1310 232h4M1340 210h3M1400 600l8 2M1440 870l10 2M1020 220l10 2M560 820h6M462 169h4" stroke="#dcdada" stroke-width="2"/>
<g fill="none" stroke="#f7a18d" stroke-width="2"><path d="M597 132l14 12 40 10 30 10M800 160l20-12 22-16M1060 761l93 26 86 120 16 25"/></g>
<g fill="none" stroke="#f7c98b" stroke-width="2"><path d="M920 132l12 22 7 34-14 20M1256 132l34 13 45 12 25 8h78l26 12 22 10h12M1294 361l10 3 14 10 26 10M1153 787l8-16 8-9M1294 694l48-11 35 1 35-4 96-31M1508 266l-15 20 3 28-9 40v40"/></g>
<path d="M1508 268l-15 20 3 28-12 40v30" fill="none" stroke="#9a9272" stroke-width="1"/>
<path d="M1162 762l6 8 6 2 3 6 9 0 5 5 14 3 5-5 9-3 2-5 9 3 11-1 5 7 8 2 3 7-2 8 5 10-6 10 4 12 8 6 1 10-3 8-4 8 2 14 7 8 2 10-3 8 4 8" fill="none" stroke="#a9bbd3" stroke-width="2.500"/>
<path d="M1358 932l22-16 22-7M1436 896l72-20" fill="none" stroke="#e06d92" stroke-width="2.500"/>
<path d="M1300 932l70-18 32-6" fill="none" stroke="#b59a80" stroke-width="1.500"/><path d="M1436 895l72-19" fill="none" stroke="#a8506c"/>
<path d="M577 136h18M655 140h20l16-2" fill="none" stroke="#a9d5e6" stroke-width="2"/><path d="M690 140l20-2v10h-10z" fill="#a4d3e3"/>
<path d="M914 134h14M916 138h14" stroke="#9fd0e6" stroke-width="1.500"/>
<path d="M1181 888l12-10M1184 886l10-4M1338 863l4 12" stroke="#9fd0e2" stroke-width="1.500"/>
<path d="M664 170h9v12h-9z" fill="#d5f3cf"/><path d="M837 143h6v5h-6z" fill="#c8c4a4"/>
<path d="M536 733h18v6h-18zM534 741h22v8h-22zM531 751h26v11h-26z" fill="#eadcec"/><path d="M423 372h5v24M440 392h20l4-6h20M423 403l18-4 20-4" stroke="#b4d6ac" stroke-width="2.500" fill="none"/>
<path d="M1473 678h20v10h-20z" fill="#dfe6cc"/><path d="M1480 678l1.500 5 6 4v1l-6-1-.5 3 2 1.500h-6l2-1.500-.5-3-6 1v-1l6-4z" fill="#8461c4"/>
<g fill="#faecd4"><path d="M1370 281h16v2h-16zM1376 292h20v2h-20zM1364 298h18v2h-18zM1385 303h12v2h-12zM1345 265h10v2h-10z"/></g>
<rect x="1402" y="893" width="34" height="14" rx="1.500" fill="#f0c4d0" stroke="#d59bb0"/><text x="1410" y="904" class="road">I 20</text>
<text x="417" y="415" class="park">Carlsb</text><text x="418" y="426" class="park">Cav</text><text x="1498" y="193" class="town">Eu</text>
</svg>
<canvas class="raster" id="raster" width="1085" height="830"></canvas>
</section>

<aside class="right">
<div class="ptitle">Processing Toolbox<svg class="dock"><use href="#dock"/></svg></div>
<div class="ptools"><b><svg><use href="#ptool"/></svg></b><b><svg><use href="#py"/></svg></b><b><svg><use href="#clock"/></svg></b><b><svg><use href="#doc"/></svg></b><i class="s"></i><b><svg><use href="#edity"/></svg></b><i class="s"></i><b><svg><use href="#wrench"/></svg></b></div>
<div class="search"><svg class="mag" viewBox="0 0 14 14"><circle cx="5.500" cy="5.500" r="4.500" fill="none" stroke="#999" stroke-width="1.300"/><path d="M9 9l4 4" stroke="#999" stroke-width="1.500"/></svg><span class="q">clip raster</span><svg class="clr" viewBox="0 0 13 10"><path d="M3.500 0H13v10H3.500L0 5z" fill="#b0b0b0"/><path d="M5.500 2.500l5 5M10.500 2.500l-5 5" stroke="#222" stroke-width="1.300"/></svg></div>
<div class="algs">
<div class="arow a1"><i class="d"></i><svg><use href="#gdal"/></svg>GDAL</div>
<div class="arow a2"><i class="d"></i>Raster extraction</div>
<div class="arow a3 sel"><svg><use href="#clipr"/></svg>Clip raster by extent</div>
<div class="arow a3"><svg><use href="#clipr"/></svg>Clip raster by mask layer</div>
</div>
<div class="ptitle idt">Identify Results<svg class="dock"><use href="#dock"/></svg></div>
<div class="ptools idtools"><b class="dim"><svg><use href="#form"/></svg></b><i class="s"></i><b><svg><use href="#expa"/></svg></b><b><svg><use href="#coll"/></svg></b><b><svg><use href="#expn"/></svg></b><i class="s"></i><b><svg><use href="#desel"/></svg></b><i class="s"></i><b class="dim"><svg><use href="#copy"/></svg></b><b class="dim"><svg><use href="#print"/></svg></b><i class="s"></i><b><svg><use href="#identm"/></svg></b><em></em><b><svg><use href="#wrenchv"/></svg></b><i class="s"></i><b><svg><use href="#help"/></svg></b></div>
<div class="results"><div class="rhead"><span>Feature</span><span>Value</span></div></div>
<div class="mode"><label>Mode</label><div class="combo">Current Layer<i class="d"></i></div></div>
</aside>
<div class="behind"></div>
</div>
</div>

<div class="msgbar"><svg viewBox="0 0 24 18"><path d="M1 5q4-3 5 5Q13 3 23 1 13 6 7 17z" fill="#2fd62f" stroke="#0b7a0b"/></svg><span class="mb">Layer Exported:</span><span class="mt">Successfully saved vector layer to</span><span class="ml">C:\Users\calla\gis_labs\module_3_manipulating_raster_data\plume_polygon.geojson</span><svg class="mclose" viewBox="0 0 18 18"><circle cx="9" cy="9" r="8.500" fill="#2d3330"/><path d="M5.500 5.500l7 7M12.500 5.500l-7 7" stroke="#fff" stroke-width="2.500"/></svg></div>

<div class="dialog">
<header><svg class="ql"><use href="#qgis"/></svg><span>Clip Raster by Extent</span><svg class="x" viewBox="0 0 12 12"><path d="M1 1l10 10M11 1L1 11" stroke="#111" stroke-width="1.200"/></svg></header>
<div class="tabs"><span class="tab act">Parameters</span><span class="tab">Log</span></div>
<div class="pane">
<div class="form">
<label class="l1">Input layer</label>
<div class="frow f1"><div class="combo"><svg><use href="#ras"/></svg><span class="ls1">EMIT_L2B_CH4ENH_001_20231224T174533_2335812_006 [EPSG:4326]</span><i class="d"></i></div><div class="btn dots">…</div></div>
<label class="l2">Clipping extent</label>
<div class="frow f2"><div class="inp"><span class="ls2">-103.873021819,-103.853013381,32.045584655,32.057038645 [EPSG:4326]</span></div><div class="split"><svg><use href="#extent"/></svg><i class="d"></i></div></div>
<div class="chk c1"><span class="box"></span><span>Override the projection for the output file</span></div>
<label class="l3">Assign a specified NoData value to output bands [optional]</label>
<div class="inp n1">Not set</div>
<div class="adv"><svg viewBox="0 0 8 11"><path d="M1 1l6 4.500L1 10z" fill="none" stroke="#0c0c0c" stroke-width="1.300"/></svg>Advanced Parameters</div>
<label class="l4">Clipped (extent)</label>
<div class="frow f3"><div class="inp ph">[Save to temporary file]</div><div class="btn dots">…<i class="d"></i></div></div>
<div class="chk c2"><span class="box ck"><svg viewBox="0 0 16 16"><path d="M3 9l3.500 4L13 3" fill="none" stroke="#fff" stroke-width="2"/></svg></span><span>Open output file after running algorithm</span></div>
<label class="l5">GDAL/OGR console call</label>
<div class="console"><span class="k1">gdal_translate -projwin -103.873021819 32.057038645 -103.853013381 32.045584655 -of GTiff C:/Users/calla/Downloads/</span><br><span class="k2">EMIT_L2B_CH4ENH_001_20231224T174533_2335812_006.tif C:/Users/calla/AppData/Local/Temp/processing_aTcoop/</span><br><span class="k3">6bad3e5258e241682fdaec5bbe96350a/OUTPUT.tif</span></div>
</div>
<div class="dscroll"><div></div></div>
</div>
<div class="prog"><div class="bar">0%</div><div class="btn off">Cancel</div></div>
<footer><div class="btn advb">Advanced<i class="d"></i></div><div class="btn batch">Run as Batch Process…</div><span class="grow"></span><div class="btn run">Run</div><div class="btn close">Close</div><div class="btn hlp">Help</div></footer>
</div>

<div class="menu m1">
<div class="mi sel"><i></i>Calculate from Layer<em></em></div>
<div class="mi"><i></i>Calculate from Layout Map<em></em></div>
<div class="mi"><i></i>Calculate from Bookmark<em></em></div>
<hr>
<div class="mi tight"><i><svg><use href="#extent"/></svg></i>Use Current Map Canvas Extent</div>
<div class="mi"><i></i>Draw on Map Canvas</div>
</div>
<div class="menu m2">
<div class="mi"><i><svg><use href="#ras"/></svg></i><span class="emit">EMIT_L2B_CH4ENH_001_20231224T174533_2335812_006</span></div>
<div class="mi"><i><svg><use href="#ras"/></svg></i>google</div>
<div class="mi"><i><svg><use href="#ras"/></svg></i><span class="osm">OpenStreetMap</span></div>
<div class="mi sel"><i class="pl"><svg><use href="#poly"/></svg></i><u class="full">plume_polygon</u></div>
</div>
<script src="raster.js"></script>
</body>
</html>
```
FILE: styles.css
```css
*{box-sizing:border-box}
body{margin:0;width:1906px;height:932px;overflow:hidden;background:#323232;color:#b1b1b1;font:11.4px/18px "Noto Sans","Open Sans",sans-serif;position:relative}
.defs{position:absolute}
b,i,em{font-weight:normal;font-style:normal}
u{text-underline-offset:2px;text-decoration-thickness:1px}
ul{list-style:none;margin:0;padding:0}
.ti{font-family:"Noto Sans",sans-serif}
.ti.a{font-size:14px;font-weight:bold;fill:#ccc}
.ti.one{font-size:8px;font-weight:bold;fill:#222}
.ti.ii{font:italic bold 15px "Liberation Serif",serif;fill:#fff}
.ti.abc{font-size:9px;font-weight:bold;fill:#222;letter-spacing:-.3px}
.ti.abc.w{fill:#fff}
.ti.q{font:bold 15px "Liberation Serif",serif;fill:#fff}

.app{height:932px;display:flex;flex-direction:column}
.topstrip{height:4px;background:#f0f0f0}
.menubar{display:grid;grid-template-columns:51px 34px 39px 42px 56px 53px 47px 46px 62px 39px 42px 71px 60px;height:23px;padding:2px 0 0 9px;white-space:nowrap}
.toolbar{display:flex;height:33px;align-items:stretch}
.toolbar.second{height:42px;padding:5px 0 4px}
.toolbar b{width:34px;display:flex;align-items:center;justify-content:center}
.toolbar b svg{width:24px;height:24px;margin-top:-1px}
.toolbar b.on{border:1px solid #d78a26;width:33px;margin-right:1px}
.toolbar em{width:16px;display:flex;align-items:center;justify-content:flex-start;padding-left:5px}
em::before{content:"";border:2.5px solid transparent;border-top:5px solid #b1b1b1;border-bottom:0}
.h{width:9px;display:flex;align-items:center;justify-content:flex-end}
.h.first{width:5px}
.h::after{content:"";width:2px;height:11px;background:#545454}
.s{width:5px;display:flex;align-items:center}
.s::after{content:"";width:2px;height:10px;background:#2a2a2a}
.dim svg{filter:grayscale(.7);opacity:.3}

.main{flex:1;display:flex;min-height:0}
.left{width:423px;display:flex;flex-direction:column}
.ptitle{height:22px;line-height:20px;text-align:center;padding-right:35px;position:relative}
.dock{position:absolute;right:11px;top:3px;width:10px;height:10px}
.ptools{height:26px;display:flex;align-items:center;padding:0 0 4px 1px;margin-bottom:2px}
.ptools b{width:26px;display:flex;justify-content:center}
.ptools b svg{width:15px;height:15px}
.ptools em{width:16px;display:flex;align-items:center;padding-left:4px}
.browser{height:357px;width:414px;border:1px solid #545454;background:#202020;display:flex;justify-content:space-between;overflow:hidden;padding:1px}
.tree{color:#e2e2e2}
.tree li{height:18px;line-height:19px;display:flex;align-items:center;width:179px;white-space:nowrap}
.tree li>i{width:20px;height:18px;display:flex;align-items:center;padding-left:6px}
.tree svg{width:15px;height:15px;margin-right:6px;color:#6d97c4}
.tree svg.lt{color:#d3dde6}
.tree li.sub{padding-left:36px}
.sel{background:#116c00}
i.d{display:flex;align-items:center}
i.r::before{content:"";border:3px solid transparent;border-left:5px solid #7d7d7d;border-right:0}
i.d::before{content:"";border:3px solid transparent;border-top:5px solid #7d7d7d;border-bottom:0}
.vscroll{width:10px;background:#535353;margin-right:1px;padding-top:31px}
.vscroll div{height:277px;margin:0 1px;background:#323232}
.ptitle.lay{margin-top:8px}
.lt2{margin-top:0;height:27px;margin-bottom:0;padding-bottom:3px}
.layers{flex:1;width:415px;border:1px solid #545454;border-bottom:0;border-left:0;background:#202020;color:#e2e2e2;padding:1px 1px 0 1px}
.lrow{height:24px;display:flex;align-items:center;position:relative;font-size:12px;font-weight:bold}
.lrow:not(.sel)::after{content:"";position:absolute;left:20px;right:0;bottom:0;height:1px;background:#303030}
.lrow>i{width:23px;display:flex;padding-left:7px}
.eye{width:18px;height:14px;overflow:visible}
.lrow .ras{width:13px;height:13px;margin:0 7px 0 8px}
.swatch{width:16px;height:16px;background:#bccc4f;border:1px solid #8b9648;margin:0 6px 0 6px}
.nm{letter-spacing:-.35px}
.nm .full{letter-spacing:-.5px}
.nm.wide{letter-spacing:-.01px}
.nm.it{font-style:italic}
.full{text-underline-offset:2px}
.band{height:21px;padding-left:43px;line-height:21px;border-bottom:1px solid #303030}
.ramp{display:flex;height:105px;padding:4px 0 0 43px;border-bottom:1px solid #303030;gap:5px;font-size:11px}
.grad{width:16px;height:96px;background:linear-gradient(#fcfdbf 0,#fec287 14%,#fb8761 26%,#e85362 38%,#b73779 52%,#812581 66%,#4f127b 78%,#1d1147 88%,#000004 97%)}
.lims{height:97px;display:flex;flex-direction:column;justify-content:space-between;line-height:14px}

.canvas{width:1085px;position:relative;overflow:hidden;background:#f2efe9}
.map{display:block}
.raster{position:absolute;left:0;top:0}
.road{font:bold 9px "DejaVu Sans",sans-serif;fill:#8b2f4e}
.park{font:italic 9px "DejaVu Sans",sans-serif;fill:#3c9151}
.town{font:10px "DejaVu Sans",sans-serif;fill:#444}

.right{width:393px;display:flex;flex-direction:column;padding-left:8px}
.right .ptitle{padding-right:25px}
.right .dock{right:3px}
.right .ptools{padding-left:2px;margin-bottom:0;height:27px}
.right .s{width:5px;justify-content:center}
.search{height:22px;border:1px solid #545454;background:#202020;color:#e2e2e2;display:flex;align-items:center;font-size:11.2px}
.q{letter-spacing:-.3px;margin-top:1px}
.mag{width:13px;height:13px;margin:0 9px 0 8px}
.clr{width:13px;height:10px;margin-left:auto;margin-right:8px}
.algs{height:355px;border:1px solid #545454;background:#202020;color:#e2e2e2;padding:1px 1px 0;line-height:18px}
.arow{display:flex;align-items:center;height:18px}
.arow svg{width:16px;height:16px;margin-right:6px}
.a1{padding-left:7px;height:20px}.a1 svg{margin-left:10px}
.a2{padding-left:28px;height:14px}.a2 i{margin-right:10px}
.a3{padding-left:63px;margin-right:2px}
.right .idt{margin-top:5px}
.right .idtools{margin-bottom:1px;padding-bottom:1px}
.idtools em{width:20px;padding-left:5px}
.results{height:315px;border:1px solid #545454;background:#202020;padding:2px;margin:0 1px}
.rhead{display:grid;grid-template-columns:99px 1fr;height:20px;background:#323232;border-bottom:1px solid #545454;line-height:19px}
.rhead span{padding-left:4px}
.rhead span+span{border-left:1px solid #545454}
.mode{display:flex;align-items:center;padding:6px 5px 0 8px}
.mode label{width:37px}
.combo{flex:1;height:24px;border:1px solid #1e1e1e;background:linear-gradient(#4c4c4c,#565656 40%,#464646);display:flex;align-items:center;padding:0 7px 0 4px}
.combo .d{margin-left:auto}
.combo .d::before,.btn .d::before,.split .d::before{border-top-color:#b1b1b1;border-left-width:2.5px;border-right-width:2.5px}
.behind{width:5px;margin-top:-94px;background:linear-gradient(#131313 0 20px,#000 20px 84px,#6d5d50 84px 124px,#222 124px 154px,#6d5d50 155px 160px,#222 160px 190px,#66584c 190px 300px,#7c6858 420px,#5b4b40 558px,#3f7a6c 560px 588px,#6e5c50 590px,#4d443e 700px,#756a5e 800px,#5d544a 900px,#111 915px)}

.msgbar{position:absolute;left:421px;top:102px;width:1089px;height:30px;background:#def0d8;border:1px solid #9cab96;display:flex;align-items:center;color:#111;white-space:nowrap;font-size:11.3px}
.msgbar>span{margin-top:2px}
.msgbar svg{width:24px;height:18px;margin:-3px 10px 0 9px}
.mb{font-weight:bold;width:90px}
.mt{width:168px;letter-spacing:-.37px}
.ml{color:#2a8f0c;text-decoration:underline;text-underline-offset:2px;letter-spacing:-.52px}
.msgbar .mclose{width:17px;height:17px;margin:-2px 22px 0 auto}

.dialog{position:absolute;left:605px;top:208px;width:689px;height:553px;background:#323232;border-radius:8px;overflow:hidden;display:flex;flex-direction:column;font-size:11.3px;box-shadow:0 0 0 1px rgba(90,90,90,.4),0 22px 45px rgba(0,0,0,.42)}
header{height:30px;background:linear-gradient(90deg,#e9f7f8,#f1f3ee 22%,#fcf1e6 38%,#f7f2e4 62%,#ecf6ef 82%,#e9f6f4);color:#111;display:flex;align-items:center;padding:0 10px 0 8px;font-size:11.6px}
.ql{width:17px;height:17px;margin-right:7px}
header .x{width:10px;height:10px;margin-left:auto}
.tabs{margin:12px 0 0 13px;display:flex;align-items:flex-end;height:24px;position:relative;z-index:1}
.tab{border:1px solid #545454;border-left:0;width:49px;height:18px;text-align:center;line-height:18px}
.tab.act{border-left:1px solid #545454;width:89px;height:24px;line-height:24px;border-bottom-color:#323232}
.pane{margin:-1px 12px 0 13px;height:393px;border:1px solid #545454;display:flex;padding:11px 4px 4px 8px;justify-content:space-between}
.form{width:636px;display:flex;flex-direction:column}
.form label{height:18px;line-height:18px;padding-left:3px;flex:none}
.l1{margin-top:3px}
.frow{display:flex;justify-content:space-between;flex:none}
.f1{margin-top:4px}
.f1 .combo{flex:none;width:606px;height:25px;padding-left:6px}
.f1 .combo svg{width:13px;height:13px;margin-right:6px}
.ls1{letter-spacing:-.33px}
.ls2{letter-spacing:-.27px}
.btn{border:1px solid #1e1e1e;background:linear-gradient(#565656,#4a4a4a);display:flex;align-items:center;justify-content:center;height:23px;white-space:nowrap}
.dots{width:24px}
.l2{margin-top:4px}
.f2{margin-top:4px}
.inp{background:#202020;border:1px solid #545454;color:#e2e2e2;display:flex;align-items:center;padding-left:4px}
.f2 .inp{width:589px;height:25px}
.split{width:41px;height:25px;border:1px solid #1e1e1e;background:linear-gradient(#565656,#4a4a4a);display:grid;grid-template-columns:22px 1fr;align-items:center}
.split svg{width:16px;height:16px;margin-left:3px}
.split .d{border-left:1px solid #1e1e1e;height:23px;justify-content:center}
.chk{display:flex;align-items:center;gap:5px;height:18px;flex:none;letter-spacing:-.48px}
.c1{margin-top:6px}
.c2{letter-spacing:-.6px}
.box{width:18px;height:18px;background:#4f4f4f;border:1px solid #262626;display:flex}
.box.ck{background:#116c00}
.l3{margin-top:5px;letter-spacing:-.53px}
.n1{height:22px;margin-top:4px;padding-left:3px;flex:none}
.adv{margin-top:6px;height:18px;font-weight:bold;color:#e8e8e8;display:flex;align-items:center;padding-left:5px;flex:none;font-size:11.6px}
.adv svg{width:7px;height:11px;margin-right:9px}
.l4{margin-top:7px}
.f3{margin-top:4px}
.ph{width:606px;height:22px;color:#5c5c5c;letter-spacing:-.4px}
.f3 .btn{height:22px}
.c2{margin-top:6px}
.l5{margin-top:45px}
.console{margin-top:4px;flex:1;background:#202020;padding:7px 0 0 6px;overflow:hidden;line-height:13px;white-space:nowrap;letter-spacing:-.4px}
.dscroll{width:10px;background:#535353;border:1px solid #545454;margin-left:4px}
.dscroll div{height:264px;background:#323232}
.prog{margin:28px 11px 0 12px;display:flex;align-items:center;justify-content:space-between}
.bar{width:618px;height:27px;border:1px solid #545454;color:#e2e2e2;display:flex;align-items:center;justify-content:center}
.off{width:42px;background:#343434;color:#5e5e5e;letter-spacing:-.3px}
footer{margin:6px 11px 0 12px;display:flex}
.grow{flex:1}
.advb{width:70px;margin-right:6px;justify-content:space-between;padding:0 4px;letter-spacing:-.4px}
.advb .d{margin-top:7px}
.batch{width:122px;letter-spacing:-.3px}
.run{width:29px;margin-right:6px}.close{width:36px;margin-right:6px}.hlp{width:31px}

.menu{position:absolute;background:#323232;border:1px solid #1c1c1c;box-shadow:3px 3px 3px rgba(0,0,0,.4);white-space:nowrap;font-size:11.5px}
.m1{left:1222px;top:385px;width:228px;height:129px;padding:5px 4px 3px}
.mi{height:23px;display:flex;align-items:center}
.tight{letter-spacing:-.15px}
.mi>i{width:28px;display:flex;padding-left:3px}
.mi svg{width:15px;height:15px}
.mi em{margin-left:auto;margin-right:3px;display:flex}
.mi em::before{border:3px solid transparent;border-left:5px solid #8a8a8a;border-right:0}
.m1 hr{margin:1px 4px 0 10px;border:0;border-top:1px solid #545454;height:3px}
.m2{left:1445px;top:385px;width:352px;height:107px;padding:5px 4px}
.m2 .mi{height:24px}
.m2 .mi svg{width:13px;height:13px;margin-left:2px}
.m2 .pl svg{width:16px;height:12px;margin:-4px 0 0 1px}
.emit{letter-spacing:-.36px}
.osm{letter-spacing:-.15px}
```
FILE: raster.js
```js
// Draws the single-band raster with the magma ramp over the base map.
(function () {
  var ox = 423, oy = 102, w = 1085, h = 830;
  var ctx = document.getElementById('raster').getContext('2d');
  var ramp = [[0,0,4],[29,17,71],[81,18,124],[130,37,129],[183,55,121],[230,81,100],[251,135,97],[254,194,135],[252,253,191]];
  var seed = 12345;
  function rnd() { seed = (seed * 1664525 + 1013904223) >>> 0; return seed / 4294967296; }
  var outline = [[740,112],[1180,488],[782,931],[423,623],[340,540],[423,432]];
  function inside(x, y) {
    var c = false;
    for (var i = 0, j = outline.length - 1; i < outline.length; j = i++) {
      var a = outline[i], b = outline[j];
      if ((a[1] > y) !== (b[1] > y) && x < (b[0] - a[0]) * (y - a[1]) / (b[1] - a[1]) + a[0]) c = !c;
    }
    return c;
  }
  var img = ctx.createImageData(w, h);
  for (var y = 0; y < h; y++) {
    for (var x = 0; x < w; x++) {
      var r = rnd(), q = rnd();
      if (!inside(x + ox, y + oy)) continue;
      var ridge = Math.pow(Math.max(0, Math.sin((x * .3 + y + 14 * Math.sin(x / 40)) / 17)), 8);
      var wave = .95 + .22 * Math.sin((x * .4 + y * 1.1) / 31) * Math.sin((x - y) / 57) + .22 * ridge * Math.max(0, Math.sin(x / 60 + y / 90));
      var v = r < .47 ? 0 : Math.min(1, Math.pow(-Math.log(1 - q * .9995), .85) * .165 * wave);
      var t = v * 8, k = Math.min(7, Math.floor(t)), f = t - k, o = (y * w + x) * 4;
      for (var n = 0; n < 3; n++) img.data[o + n] = ramp[k][n] + (ramp[k + 1][n] - ramp[k][n]) * f;
      img.data[o + 3] = 255;
    }
  }
  ctx.putImageData(img, 0, 0);
})();
```
